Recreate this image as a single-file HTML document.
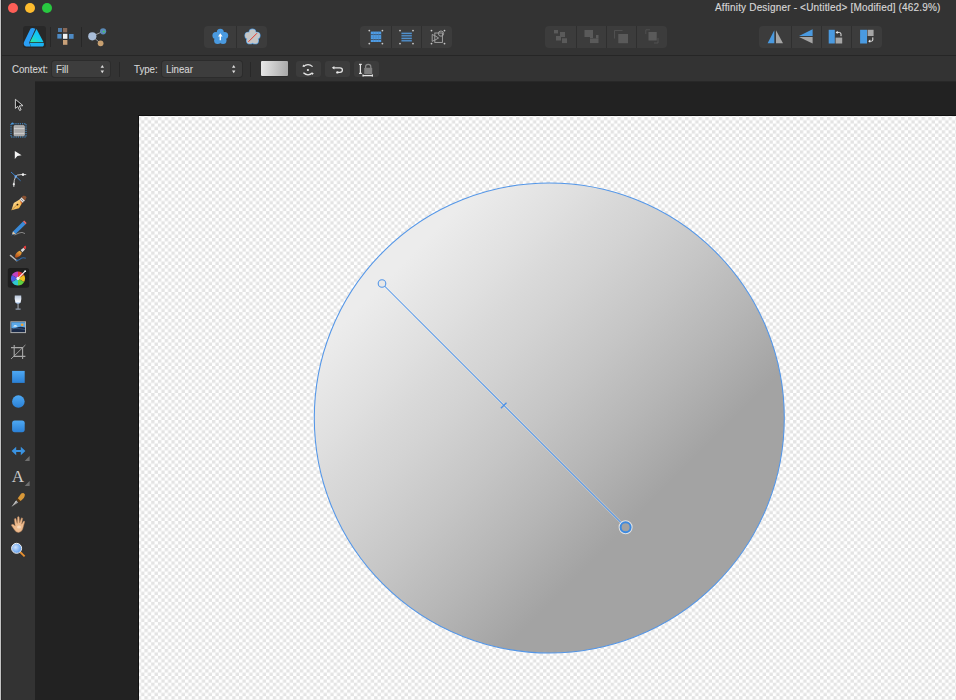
<!DOCTYPE html>
<html><head><meta charset="utf-8">
<style>
html,body{margin:0;padding:0;}
body{width:956px;height:700px;overflow:hidden;position:relative;background:#333333;font-family:"Liberation Sans",sans-serif;}
.a{position:absolute;}
#winedge{left:0;top:0;width:1px;height:700px;background:#c4c4c4;}
#winedge2{left:1px;top:0;width:1px;height:700px;background:#2a2a2a;}
#sep1{left:2px;top:55px;width:954px;height:1px;background:#262626;}
#ctxbot{left:35px;top:81px;width:921px;height:1px;background:#282828;}
#dark{left:35px;top:82px;width:921px;height:618px;background:#222222;}
#canvas{left:139px;top:116px;width:817px;height:584px;background-color:#fff;}
#canvasline{left:138px;top:115px;width:818px;height:1px;background:#111;}
#canvasline2{left:138px;top:115px;width:1px;height:585px;background:#111;}
.title{left:715px;top:1.8px;font-size:10px;letter-spacing:0.18px;color:#d6d6d6;-webkit-text-stroke:0.15px #d6d6d6;white-space:nowrap;}
.grp{background:#3c3c3c;border-radius:4px;height:22px;top:25.5px;}
.div{width:1px;background:#282828;}
.lbl{font-size:10.2px;letter-spacing:0px;transform:scaleX(0.95);transform-origin:0 0;color:#d4d4d4;-webkit-text-stroke:0.12px #d4d4d4;white-space:nowrap;}
.dd{background:#3d3d3d;border-radius:3px;top:60.6px;height:16.2px;box-shadow:0 0 0 1px #2c2c2c;}
.btn{background:#3c3c3c;border-radius:3px;top:61px;height:16px;}
</style></head><body>
<div class="a" id="winedge"></div>
<div class="a" id="winedge2"></div>

<!-- traffic lights -->
<div class="a" style="left:7.7px;top:2.6px;width:10.4px;height:10.4px;border-radius:50%;background:#fe5f57;"></div>
<div class="a" style="left:24.7px;top:2.6px;width:10.4px;height:10.4px;border-radius:50%;background:#febc2e;"></div>
<div class="a" style="left:41.7px;top:2.6px;width:10.4px;height:10.4px;border-radius:50%;background:#28c840;"></div>

<div class="a title">Affinity Designer - &lt;Untitled&gt; [Modified] (462.9%)</div>

<div class="a" id="sep1"></div>
<div class="a" id="ctxbot"></div>
<div class="a" id="dark"></div>
<div class="a" id="canvasline"></div>
<div class="a" id="canvasline2"></div>
<div class="a" id="canvas"><svg width="817" height="584" style="display:block"><defs><pattern id="chk" patternUnits="userSpaceOnUse" x="-1.33" y="0.8" width="6.757" height="6.737"><rect width="6.757" height="6.737" fill="#ffffff"/><rect width="3.3785" height="3.3685" fill="#e4e4e4"/><rect x="3.3785" y="3.3685" width="3.3785" height="3.3685" fill="#e4e4e4"/></pattern></defs><rect width="817" height="584" fill="url(#chk)"/></svg></div>

<!-- context bar -->
<div class="a lbl" style="left:12px;top:63.6px;">Context:</div>
<div class="a dd" style="left:52px;width:58px;"></div>
<div class="a lbl" style="left:56px;top:63.6px;">Fill</div>
<div class="a lbl" style="left:134px;top:63.6px;">Type:</div>
<div class="a dd" style="left:162px;width:80px;"></div>
<div class="a lbl" style="left:166px;top:63.6px;">Linear</div>
<div class="a div" style="left:119px;top:62px;height:15px;"></div>
<div class="a div" style="left:250px;top:62px;height:15px;"></div>
<div class="a" style="left:261.3px;top:61px;width:27.2px;height:14.8px;border-radius:1px;background:linear-gradient(95deg,#e8e8e8,#a8a8a8);box-shadow:0 0.5px 0 #262626;"></div>
<div class="a btn" style="left:295.5px;width:25px;"></div>
<div class="a btn" style="left:324.5px;width:25px;"></div>
<div class="a btn" style="left:353.5px;width:25px;"></div>

<!-- main toolbar groups -->
<div class="a" style="left:22.6px;top:25.5px;width:23px;height:22.5px;border-radius:3px;background:#282828;"></div>
<div class="a div" style="left:49.5px;top:27px;height:20px;background:#272727;"></div>
<div class="a div" style="left:80.5px;top:27px;height:20px;background:#272727;"></div>
<div class="a grp" style="left:204px;width:63px;"></div>
<div class="a grp" style="left:360px;width:92px;"></div>
<div class="a grp" style="left:544.5px;width:122px;"></div>
<div class="a grp" style="left:759px;width:123px;"></div>


<div class="a div" style="left:236px;top:25.5px;height:22px;background:#2f2f2f;"></div>
<div class="a div" style="left:390.5px;top:25.5px;height:22px;background:#2f2f2f;"></div>
<div class="a div" style="left:420.5px;top:25.5px;height:22px;background:#2f2f2f;"></div>
<div class="a div" style="left:575.5px;top:25.5px;height:22px;background:#2f2f2f;"></div>
<div class="a div" style="left:606px;top:25.5px;height:22px;background:#2f2f2f;"></div>
<div class="a div" style="left:635.5px;top:25.5px;height:22px;background:#2f2f2f;"></div>
<div class="a div" style="left:790.5px;top:25.5px;height:22px;background:#2f2f2f;"></div>
<div class="a div" style="left:821px;top:25.5px;height:22px;background:#2f2f2f;"></div>
<div class="a div" style="left:850.5px;top:25.5px;height:22px;background:#2f2f2f;"></div>
<div class="a" style="left:11.8px;top:466.6px;font-family:'Liberation Serif',serif;font-size:17px;color:#cccccc;line-height:20px;">A</div>

<!-- circle -->
<svg class="a" style="left:0;top:0;" width="956" height="700" viewBox="0 0 956 700">
 <defs>
  <linearGradient id="g" gradientUnits="userSpaceOnUse" x1="382" y1="283.5" x2="625.6" y2="527.2">
<stop offset="0.0" stop-color="#ececec"/>
<stop offset="0.1" stop-color="#e6e6e6"/>
<stop offset="0.2" stop-color="#e0e0e0"/>
<stop offset="0.3" stop-color="#d9d9d9"/>
<stop offset="0.4" stop-color="#d3d3d3"/>
<stop offset="0.5" stop-color="#cccccc"/>
<stop offset="0.6" stop-color="#c5c5c5"/>
<stop offset="0.7" stop-color="#bdbdbd"/>
<stop offset="0.8" stop-color="#b5b5b5"/>
<stop offset="0.9" stop-color="#acacac"/>
<stop offset="1.0" stop-color="#a3a3a3"/>
  </linearGradient>
 </defs>
 <circle cx="549.3" cy="418" r="235" fill="url(#g)" stroke="#5396e8" stroke-width="1.05"/>
 <line x1="382" y1="283.5" x2="625.6" y2="527.2" stroke="#ffffff" stroke-width="2.4" opacity="0.35"/>
 <line x1="382" y1="283.5" x2="625.6" y2="527.2" stroke="#5396e8" stroke-width="1.05"/>
 <circle cx="382" cy="283.5" r="3.8" fill="#e8e8e8" stroke="#5396e8" stroke-width="1.1"/>
 <circle cx="625.6" cy="527.2" r="5" fill="#a2a2a2" stroke="#ffffff" stroke-width="4" opacity="0.7"/>
 <circle cx="625.6" cy="527.2" r="5" fill="#a2a2a2" stroke="#3d8ae0" stroke-width="2"/>
 <line x1="500.9" y1="408.3" x2="506.5" y2="402.7" stroke="#4a8fe6" stroke-width="1.3"/>
</svg>


<!-- ICONS -->
<svg class="a" style="left:0;top:0;" width="956" height="700" viewBox="0 0 956 700">
 <defs>
  <linearGradient id="adlogo" x1="0.8" y1="0.1" x2="0.1" y2="0.9">
   <stop offset="0" stop-color="#10b8f8"/><stop offset="0.55" stop-color="#16cbee"/><stop offset="1" stop-color="#2ae6a8"/>
  </linearGradient>
  <linearGradient id="blueRect" x1="0" y1="0" x2="0" y2="1">
   <stop offset="0" stop-color="#4ea8f2"/><stop offset="1" stop-color="#2a80d6"/>
  </linearGradient>
  <linearGradient id="glass" x1="0" y1="0" x2="0" y2="1">
   <stop offset="0" stop-color="#b8c6da"/><stop offset="0.7" stop-color="#f4f8ff"/><stop offset="1" stop-color="#8ab0e0"/>
  </linearGradient>
  <linearGradient id="nib" x1="0" y1="0" x2="1" y2="1">
   <stop offset="0" stop-color="#fde6b0"/><stop offset="1" stop-color="#f0a420"/>
  </linearGradient>
  <linearGradient id="bhead" x1="0.7" y1="0" x2="0.3" y2="1">
   <stop offset="0" stop-color="#f0b040"/><stop offset="1" stop-color="#b04818"/>
  </linearGradient>
  <radialGradient id="lens" cx="0.4" cy="0.4" r="0.7">
   <stop offset="0" stop-color="#cfe4ff"/><stop offset="1" stop-color="#4a90e8"/>
  </radialGradient>
 </defs>

 <!-- Designer logo -->
 <path d="M30.6 28.4 Q32.8 27.4 35.4 28.8 L29.2 42.4 L30.6 46.4 L26.2 46.4 Q23 45.8 23.9 42.2 Z" fill="#2a9ff6"/>
 <path d="M36.5 29 L43.6 42.2 L29.9 42.2 Z" fill="url(#adlogo)"/>
 <path d="M29.8 43.1 L43.8 43.1 Q44.2 46.4 42.8 46.4 L30.8 46.4 Z" fill="#1ab2f4"/>
 <!-- Pixel persona -->
 <rect x="58" y="28" width="4" height="4" fill="#4d7aa6"/>
 <rect x="63" y="28" width="4.2" height="4.3" fill="#8a6a58"/>
 <rect x="57.3" y="34" width="4.3" height="4.6" fill="#4e8ac4"/>
 <rect x="63" y="33.8" width="4.4" height="5" fill="#f2f2f2"/>
 <rect x="69" y="34" width="4.6" height="4.8" fill="#4e8ac4"/>
 <rect x="63" y="40" width="4.4" height="4.8" fill="#c8a078"/>

 <!-- Export persona -->
 <line x1="92.3" y1="36.3" x2="103.1" y2="31.3" stroke="#9a9a9a" stroke-width="1"/>
 <line x1="92.3" y1="36.3" x2="100.6" y2="43.3" stroke="#9a9a9a" stroke-width="1"/>
 <circle cx="92.3" cy="36.3" r="4.1" fill="#a9bdd8"/>
 <circle cx="103.1" cy="31.3" r="3.1" fill="#5a8ab8"/>
 <circle cx="103.8" cy="31.6" r="0.8" fill="#40e040"/>
 <circle cx="100.6" cy="43.3" r="2.9" fill="#c8a070"/>

 <!-- flower 1 -->
 <g fill="#4a9ae0">
  <circle cx="220.30" cy="36.90" r="5.00"/>
  <circle cx="220.30" cy="32.30" r="3.50"/>
  <circle cx="224.67" cy="35.48" r="3.50"/>
  <circle cx="223.00" cy="40.62" r="3.50"/>
  <circle cx="217.60" cy="40.62" r="3.50"/>
  <circle cx="215.93" cy="35.48" r="3.50"/>
 </g>
 <path d="M220.3 33.2 L222.6 36.6 L221 36.6 L221 40.2 L219.6 40.2 L219.6 36.6 L218 36.6 Z" fill="#ffffff"/>
 <!-- flower 2 -->
 <g fill="#4f9be2">
  <circle cx="252.50" cy="36.90" r="5.40"/>
  <circle cx="252.50" cy="32.50" r="3.90"/>
  <circle cx="256.68" cy="35.54" r="3.90"/>
  <circle cx="255.09" cy="40.46" r="3.90"/>
  <circle cx="249.91" cy="40.46" r="3.90"/>
  <circle cx="248.32" cy="35.54" r="3.90"/>
 </g>
 <g fill="#c6c6c6">
  <circle cx="252.50" cy="36.90" r="4.80"/>
  <circle cx="252.50" cy="32.50" r="3.25"/>
  <circle cx="256.68" cy="35.54" r="3.25"/>
  <circle cx="255.09" cy="40.46" r="3.25"/>
  <circle cx="249.91" cy="40.46" r="3.25"/>
  <circle cx="248.32" cy="35.54" r="3.25"/>
 </g>
 <line x1="248.4" y1="41.8" x2="257" y2="33.2" stroke="#e83a30" stroke-width="1"/>

 <!-- group 2 corner marks -->
 <g fill="#c8c8c8">
  <circle cx="369.3" cy="30.6" r="0.9"/><circle cx="382.4" cy="30.6" r="0.9"/>
  <circle cx="369.3" cy="43.6" r="0.9"/><circle cx="382.4" cy="43.6" r="0.9"/>
  <circle cx="400" cy="30.6" r="0.9"/><circle cx="413" cy="30.6" r="0.9"/>
  <circle cx="400" cy="43.6" r="0.9"/><circle cx="413" cy="43.6" r="0.9"/>
  <circle cx="431.5" cy="30.6" r="0.9"/><circle cx="444.5" cy="30.6" r="0.9"/>
  <circle cx="431.5" cy="43.6" r="0.9"/><circle cx="444.5" cy="43.6" r="0.9"/>
 </g>
 <rect x="370.8" y="31.6" width="10.4" height="10.4" fill="#4f9de6"/>
 <g stroke="#3a4654" stroke-width="0.8">
  <line x1="370.8" y1="34.6" x2="381.2" y2="34.6"/>
  <line x1="370.8" y1="39.5" x2="381.2" y2="39.5"/>
 </g>
 <g stroke="#4680b8" stroke-width="0.5">
  <line x1="373.4" y1="31.6" x2="373.4" y2="42"/><line x1="376" y1="31.6" x2="376" y2="42"/><line x1="378.6" y1="31.6" x2="378.6" y2="42"/>
  <line x1="370.8" y1="37.1" x2="381.2" y2="37.1"/>
 </g>
 <rect x="401.3" y="31.8" width="10.6" height="10.2" fill="#3d4a58"/>
 <g stroke="#56a2ea" stroke-width="1">
  <line x1="401.5" y1="33.3" x2="411.8" y2="33.3"/>
  <line x1="401.5" y1="35.8" x2="411.8" y2="35.8"/>
  <line x1="401.5" y1="38.3" x2="411.8" y2="38.3"/>
  <line x1="401.5" y1="40.8" x2="411.8" y2="40.8"/>
 </g>
 <g fill="none" stroke="#a8a8a8" stroke-width="0.9">
  <rect x="434.8" y="33" width="7.6" height="9.4"/>
  <path d="M434.8 35.8 L432.2 34.4 L432.2 41.4 L434.8 40"/>
  <path d="M434.8 35.6 L438.6 38 L434.8 40.2"/>
  <circle cx="441" cy="33.6" r="2.6"/>
 </g>

 <!-- group 3 disabled -->
 <g fill="#5a5a5a">
  <rect x="554" y="30" width="4" height="3.4"/>
  <rect x="560" y="32" width="5" height="5"/>
  <rect x="556" y="36" width="5" height="4.5"/>
  <rect x="562" y="38.3" width="5" height="4.8"/>
  <rect x="584.5" y="30" width="8.5" height="7"/>
  <rect x="590" y="36" width="3" height="2"/>
  <rect x="590" y="38.5" width="8.5" height="4.6"/>
  <rect x="596" y="35" width="2.5" height="3.5"/>
  <rect x="618.3" y="34" width="9.7" height="9.2"/>
  <rect x="648.5" y="32" width="8.2" height="8.5"/>
 </g>
 <g fill="none" stroke="#555" stroke-width="0.8">
  <path d="M614.5 38.5 L614.5 30.5 L622.5 30.5"/>
  <path d="M645.8 34 L645.8 29.8 L650 29.8"/>
  <path d="M658 38 L658 43 L654 43"/>
 </g>

 <!-- group 4 flips -->
 <path d="M774.3 30.3 L774.3 43.3 L767.6 43.3 Z" fill="#4a9ae0"/>
 <path d="M776 30.3 L776 43.3 L783 43.3 Z" fill="#a6a6a6"/>
 <path d="M812.6 29.3 L812.6 35.9 L799 35.9 Z" fill="#4a9ae0"/>
 <path d="M812.6 37.1 L812.6 43.6 L799 37.1 Z" fill="#a6a6a6"/>
 <rect x="828.7" y="29.8" width="6.1" height="13.7" fill="#4a9ae0"/>
 <rect x="835.6" y="37.6" width="6.6" height="5.9" fill="#a6a6a6"/>
 <path d="M836.8 32.4 L839.4 32.4 Q841 32.4 841 34.2 L841 36.2" fill="none" stroke="#e8e8e8" stroke-width="1"/>
 <path d="M835.6 32.4 L837.6 30.8 L837.6 34 Z" fill="#e8e8e8"/>
 <rect x="860.1" y="29.8" width="6.9" height="13.7" fill="#4a9ae0"/>
 <rect x="867.6" y="29.8" width="6" height="6.2" fill="#a6a6a6"/>
 <path d="M872.8 37.4 L872.8 40 Q872.8 41.2 871.4 41.2 L869.6 41.2" fill="none" stroke="#e8e8e8" stroke-width="1"/>
 <path d="M868.2 41.2 L870.2 39.6 L870.2 42.8 Z" fill="#e8e8e8"/>

 <!-- context bar dropdown arrows -->
 <g fill="#dcdcdc">
  <path d="M100.6 67.7 L104 67.7 L102.3 65 Z"/><path d="M100.6 70.6 L104 70.6 L102.3 73.2 Z"/>
  <path d="M232 67.7 L235.4 67.7 L233.7 65 Z"/><path d="M232 70.6 L235.4 70.6 L233.7 73.2 Z"/>
 </g>
 <!-- ctx btn icons -->
 <g fill="none" stroke="#e4e4e4" stroke-width="1.25">
  <path d="M303.4 66.6 Q308 62.6 312.6 66.6"/>
  <path d="M303.4 72.8 Q308 76.8 312.6 72.8"/>
  <path d="M333.8 67.8 L340 67.8 Q342.4 67.8 342.4 70 Q342.4 72.4 339.8 72.4 L337.6 72.4"/>
  <line x1="360.4" y1="64.4" x2="360.4" y2="73.4"/>
  <line x1="359" y1="64.4" x2="361.8" y2="64.4"/>
  <line x1="359" y1="73.4" x2="361.8" y2="73.4"/>
  <line x1="363" y1="75.6" x2="372.4" y2="75.6"/>
  <line x1="363" y1="74.4" x2="363" y2="76.6"/><line x1="372.4" y1="74.4" x2="372.4" y2="76.6"/>
 </g>
 <circle cx="307.9" cy="70" r="1.1" fill="#e8e8e8"/>
 <path d="M302.2 66.6 L305 66.6 L303.6 64.6 Z" fill="#e4e4e4"/>
 <path d="M311 73 L313.8 73 L312.4 75 Z" fill="#e4e4e4"/>
 <path d="M331.8 67.8 L334.4 66 L334.4 69.6 Z" fill="#e4e4e4"/>
 <circle cx="337.4" cy="72.4" r="1.2" fill="#e8e8e8"/>
 <path d="M365.6 68 L365.6 66.6 Q365.6 64.4 368.2 64.4 Q370.8 64.4 370.8 66.6 L370.8 68" fill="none" stroke="#8a8a8a" stroke-width="1.2"/>
 <rect x="364.2" y="67.8" width="8" height="6.4" rx="0.8" fill="#7e7e7e"/>

 <!-- LEFT TOOLBAR -->
 <!-- move -->
 <path d="M15.4 99.3 L15.4 108.4 L17.7 106.4 L19.6 110.5 L21.1 109.8 L19.3 105.9 L23 105.7 Z" fill="#1c1c1c" stroke="#dcdcdc" stroke-width="0.9" stroke-linejoin="round"/>
 <!-- artboard -->
 <rect x="11" y="123.8" width="15" height="13.2" fill="none" stroke="#4a9ae0" stroke-width="1" stroke-dasharray="1.2 1"/>
 <rect x="14" y="125.6" width="10.4" height="10.2" rx="0.8" fill="#a8a8a8" stroke="#d0d0d0" stroke-width="0.6"/>
 <line x1="14" y1="128.6" x2="24.4" y2="128.6" stroke="#e0e0e0" stroke-width="0.7"/>
 <line x1="14" y1="133.4" x2="24.4" y2="133.4" stroke="#e0e0e0" stroke-width="0.7"/>
 <circle cx="12.5" cy="123.6" r="1" fill="#4a9ae0"/>
 <!-- node arrow -->
 <path d="M14.8 151.1 L21.6 155.3 L17.4 155.9 L14.8 158.9 Z" fill="#f4f4f4"/>
 <!-- corner tool -->
 <line x1="11" y1="172" x2="20.6" y2="180.8" stroke="#3a7ec8" stroke-width="1"/>
 <path d="M15.7 176.5 Q16.5 174.6 21 174.6 L26.2 174.6" fill="none" stroke="#d8d8d8" stroke-width="0.9"/>
 <path d="M15.7 176.5 Q13.8 179 13.8 187" fill="none" stroke="#d8d8d8" stroke-width="0.9"/>
 <circle cx="23" cy="174.6" r="1.3" fill="#f0f0f0"/>
 <path d="M13.8 182.6 L15 184.2 L13.8 185.8 L12.6 184.2 Z" fill="#f0f0f0"/>
 <rect x="14.6" y="175.4" width="2.2" height="2.2" fill="#6aa8f0"/>
 <!-- pen -->
 <path d="M11.4 210.2 L13.8 203 L19.6 199.6 L22.4 202.4 L19 208.2 Z" fill="url(#nib)"/>
 <path d="M19.6 199.6 L22.4 202.4 L21.4 204.6 Z" fill="#c84a20" opacity="0.8"/>
 <path d="M11.8 209.8 L17.2 204.6" stroke="#9a6a30" stroke-width="0.6"/>
 <circle cx="17.5" cy="204.6" r="0.9" fill="#2a1a08"/>
 <path d="M19.4 199.4 L21.6 197.2 L25 200.6 L22.8 202.8 Z" fill="#dedede"/>
 <path d="M20.4 198.4 L23.8 201.8" stroke="#555" stroke-width="0.6"/>
 <path d="M21.6 197.2 L23.2 195.8 Q25.2 195.4 26.6 197.2 L25 200.6 Z" fill="#8a5232"/>
 <!-- pencil -->
 <path d="M12 234.6 L13 231.4 L23 221.6 L25.6 224.2 L15.6 234 Z" fill="#3a8ad8"/>
 <path d="M23 221.6 L24.2 220.6 L26.6 223 L25.6 224.2 Z" fill="#e86a6a"/>
 <path d="M12 234.6 L13 231.4 L15.6 234 Z" fill="#e8c8a0"/>
 <path d="M11.5 235.2 L12.4 234.4" stroke="#2a5aa0" stroke-width="1"/>
 <path d="M14.5 235 Q17 234 19 233 Q22 231.5 25 233.6" fill="none" stroke="#9a9a9a" stroke-width="0.8"/>
 <!-- brush -->
 <path d="M10.4 255.4 L16.8 260.8" stroke="#b8b8b8" stroke-width="1.4" stroke-linecap="round"/>
 <path d="M16.2 260.4 Q18.5 260.6 20.5 258.8 Q22.6 257.2 25.8 258.2" fill="none" stroke="#2f68a8" stroke-width="1.1"/>
 <path d="M15 256.6 Q15.4 252.6 19.6 250.8 L21.8 252.6 Q21 256.8 16.6 257.8 Q15 257.8 15 256.6 Z" fill="url(#bhead)"/>
 <path d="M20.6 250 L23.6 247.8 L25 249.4 L22.4 252.2 Z" fill="#d8d8d8"/>
 <path d="M23.4 248 Q24.2 245.4 25.6 245.8 Q26.8 246.4 25.6 249.2 Z" fill="#e83a3a"/>
 <!-- fill tool selected -->
 <rect x="7.8" y="268" width="21.4" height="19.8" rx="2.5" fill="#1e1e1e"/>
 <g transform="translate(18 278.4)">
  <path d="M0 0 L0 -7 A7 7 0 0 1 6.06 -3.5 Z" fill="#e83838"/>
  <path d="M0 0 L6.06 -3.5 A7 7 0 0 1 6.06 3.5 Z" fill="#f0c020"/>
  <path d="M0 0 L6.06 3.5 A7 7 0 0 1 0 7 Z" fill="#60d040"/>
  <path d="M0 0 L0 7 A7 7 0 0 1 -6.06 3.5 Z" fill="#30c8d0"/>
  <path d="M0 0 L-6.06 3.5 A7 7 0 0 1 -6.06 -3.5 Z" fill="#5060e8"/>
  <path d="M0 0 L-6.06 -3.5 A7 7 0 0 1 0 -7 Z" fill="#c040c0"/>
  <line x1="0" y1="0" x2="7.2" y2="-7.2" stroke="#f4f4f4" stroke-width="1.1"/>
  <circle cx="0" cy="0" r="1.6" fill="#f4f4f4"/>
  <circle cx="7.2" cy="-7.2" r="0.9" fill="#f4f4f4"/>
 </g>
 <!-- transparency glass -->
 <path d="M14.8 295.6 L21.2 295.6 Q21.8 300 20.6 302.6 Q19.6 304 18 304 Q16.4 304 15.4 302.6 Q14.2 300 14.8 295.6 Z" fill="url(#glass)"/>
 <rect x="17.6" y="303.8" width="0.9" height="5" fill="#b8c0cc"/>
 <rect x="15.6" y="308.6" width="5" height="1" fill="#a8b8d0"/>
 <!-- place image -->
 <rect x="10.4" y="321.3" width="15.6" height="11.8" fill="#b0b0b0"/>
 <rect x="11.4" y="322.3" width="13.6" height="9.8" fill="#1a2a48"/>
 <path d="M11.4 322.3 L25 322.3 L25 327.4 Q20 326 17 327.6 Q14 329 11.4 328 Z" fill="#5aa8e8"/>
 <circle cx="22.2" cy="324.8" r="1.4" fill="#f0a030"/>
 <path d="M13.2 326.4 Q14.4 324.6 16.2 325.4 Q17.8 325.6 17.4 326.6 Z" fill="#ffffff"/>
 <path d="M11.4 329.2 Q16 327.6 25 329.6" fill="none" stroke="#4a6a90" stroke-width="0.6"/>
 <!-- crop -->
 <g stroke="#a8a8a8" stroke-width="1.1" fill="none">
  <path d="M14.2 345 L14.2 356.4 L25.4 356.4"/>
  <path d="M11 347.6 L22.6 347.6 L22.6 359"/>
  <path d="M11 359 L25.4 345" stroke-width="0.9"/>
 </g>
 <!-- rectangle / ellipse / rounded -->
 <rect x="12.1" y="370.9" width="12.6" height="12" fill="url(#blueRect)"/>
 <ellipse cx="18.35" cy="401.6" rx="6.3" ry="6.25" fill="url(#blueRect)"/>
 <rect x="12.1" y="420.6" width="12.6" height="11.6" rx="2.6" fill="url(#blueRect)"/>
 <!-- double arrow -->
 <path d="M11.6 451 L16.2 446.8 L16.2 449.9 L20.8 449.9 L20.8 446.8 L25.4 451 L20.8 455.2 L20.8 452.1 L16.2 452.1 L16.2 455.2 Z" fill="#3a92e0"/>
 <path d="M29.6 456 L29.6 461 L24.7 461 Z" fill="#707070"/>
 <path d="M29.6 481 L29.6 486 L24.7 486 Z" fill="#707070"/>
 <!-- eyedropper -->
 <path d="M11.6 506.8 L16.2 500.6 L18.2 502.6 Z" fill="#a0a0a0"/>
 <path d="M11.6 506.8 L16.2 500.6 L16.8 501.2 Z" fill="#d8d8d8"/>
 <path d="M16.4 499.6 L19.2 502.4 L20.6 501 L17.8 498.2 Z" fill="#5a3810"/>
 <path d="M17.8 498.2 L20.6 501 Q25.2 497.4 24.8 494.4 Q23.6 492.2 21.2 493.6 Z" fill="#d89838"/>
 <!-- hand -->
 <path d="M12.2 526.6 Q10.8 525.2 11.8 524.4 Q13.2 523.8 15.2 526 L14.4 519.4 Q14.6 518 15.8 518.6 L17.2 523.4 L17.6 517 Q18.2 516 19.1 517 L19.6 523 L21.4 518 Q22.2 517.4 22.6 518.4 L21.6 524.2 L23.8 521 Q24.8 520.8 24.6 522 L22.8 528.6 Q21.8 532.4 18.4 532.4 Q15.8 532.4 14.4 529.8 Z" fill="#eebb8e" stroke="#b8845c" stroke-width="0.5"/>
 <ellipse cx="19" cy="527" rx="2" ry="1.5" fill="#f8d8b8"/>
 <!-- zoom -->
 <line x1="20.2" y1="552" x2="24.6" y2="556.4" stroke="#e89030" stroke-width="1.8"/>
 <circle cx="16.6" cy="548.3" r="5" fill="url(#lens)" stroke="#f0f0f0" stroke-width="1"/>
</svg>

</body></html>
